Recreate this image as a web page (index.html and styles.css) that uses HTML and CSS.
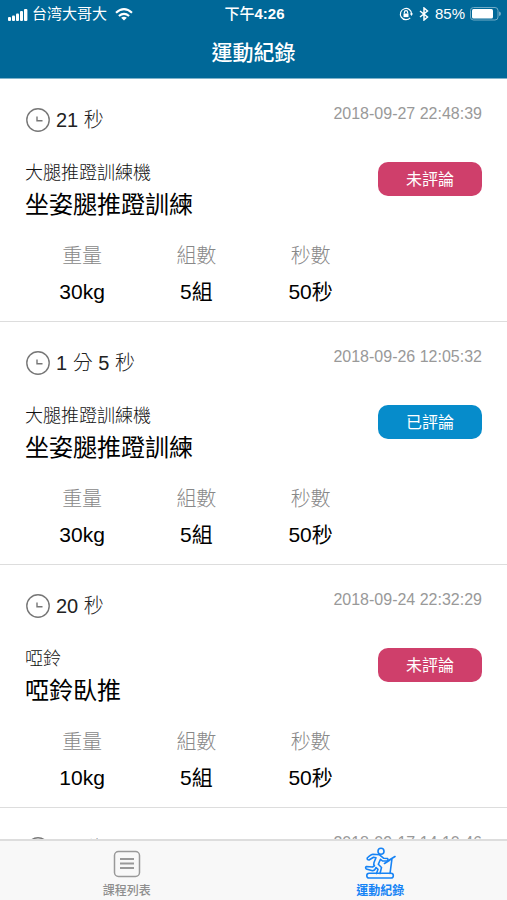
FILE: index.html
```html
<!DOCTYPE html>
<html lang="zh-Hant">

<head>
  <meta charset="UTF-8" />
  <meta name="viewport" content="width=device-width, initial-scale=1" />
  <title>運動紀錄</title>
  <link rel="stylesheet" href="styles.css">
</head>

<body>
  <!-- Icons used more than once -->
  <svg class="symbols" aria-hidden="true">
    <symbol id="clock" viewBox="0 0 24 24">
      <circle cx="12.5" cy="12" r="11.2" fill="none" stroke="#777" stroke-width="1.4" />
      <path d="M11.500 8.500V12.800H17" fill="none" stroke="#777" stroke-width="1.4" />
    </symbol>
  </svg>

  <header class="header">
    <div class="status-bar">
      <div class="status-left">
        <svg width="20" height="13" viewBox="0 0 20 13" fill="#fff" aria-hidden="true">
          <rect x="0" y="9" width="3" height="4" rx="1" />
          <rect x="4" y="7.5" width="3" height="5.5" rx="1" />
          <rect x="8" y="5.5" width="3" height="7.5" rx="1" />
          <rect x="12" y="3" width="3" height="10" rx="1" />
          <rect x="16" y="1" width="3.4" height="12" rx="1" />
        </svg>
        <span>台湾大哥大</span>
        <svg class="wifi" width="18" height="13" viewBox="0 0 18 13" aria-hidden="true">
          <path d="M1 4.8Q9-2.4 17 4.8M3.9 8Q9 3.6 14.1 8" fill="none" stroke="#fff" stroke-width="2.1" />
          <path d="M9 12.6L6.1 9.8Q9 7.6 11.9 9.8Z" fill="#fff" />
        </svg>
      </div>
      <div class="status-time">下午<b>4:26</b></div>
      <div class="status-right">
        <svg width="14" height="14" viewBox="0 0 14 14" fill="none" stroke="#fff" stroke-width="1.2" aria-hidden="true">
          <path d="M11.2 10.8A5.6 5.6 0 1 1 12.6 7" />
          <path d="M10.8 6.6H14L12.5 9Z" fill="#fff" stroke="none" />
          <rect x="4.5" y="6.5" width="5" height="3.6" fill="#fff" stroke="none" />
          <path d="M5.4 6.6V5.2a1.6 1.6 0 0 1 3.2 0v1.4" />
        </svg>
        <svg width="10" height="14" viewBox="0 0 10 14" fill="none" stroke="#fff" stroke-width="1.5" aria-hidden="true">
          <path d="M1 4L8.5 10L5 13V1L8.5 4L1 10" />
        </svg>
        <span>85%</span>
        <svg class="battery" width="31" height="14" viewBox="0 0 31 14" aria-hidden="true">
          <rect x="0.5" y="0.5" width="27.5" height="12.5" rx="3" fill="none" stroke="#70abc6" />
          <rect x="2" y="2" width="21" height="9.5" rx="1.5" fill="#fff" />
          <path d="M29 4.5q2 .5 2 2.3t-2 2.3z" fill="#70abc6" />
        </svg>
      </div>
    </div>
    <h1 class="page-title">運動紀錄</h1>
  </header>

  <main class="records">
    <article class="record">
      <div class="record-top">
        <svg class="clock" aria-hidden="true"><use href="#clock" /></svg>
        <span class="duration">21 秒</span>
        <time class="date">2018-09-27 22:48:39</time>
      </div>
      <div class="record-info">
        <div>
          <p class="machine">大腿推蹬訓練機</p>
          <h2 class="exercise">坐姿腿推蹬訓練</h2>
        </div>
        <button class="review-btn" type="button">未評論</button>
      </div>
      <dl class="stats">
        <div><dt>重量</dt><dd>30kg</dd></div>
        <div><dt>組數</dt><dd>5組</dd></div>
        <div><dt>秒數</dt><dd>50秒</dd></div>
      </dl>
    </article>

    <article class="record">
      <div class="record-top">
        <svg class="clock" aria-hidden="true"><use href="#clock" /></svg>
        <span class="duration">1 分 5 秒</span>
        <time class="date">2018-09-26 12:05:32</time>
      </div>
      <div class="record-info">
        <div>
          <p class="machine">大腿推蹬訓練機</p>
          <h2 class="exercise">坐姿腿推蹬訓練</h2>
        </div>
        <button class="review-btn done" type="button">已評論</button>
      </div>
      <dl class="stats">
        <div><dt>重量</dt><dd>30kg</dd></div>
        <div><dt>組數</dt><dd>5組</dd></div>
        <div><dt>秒數</dt><dd>50秒</dd></div>
      </dl>
    </article>

    <article class="record">
      <div class="record-top">
        <svg class="clock" aria-hidden="true"><use href="#clock" /></svg>
        <span class="duration">20 秒</span>
        <time class="date">2018-09-24 22:32:29</time>
      </div>
      <div class="record-info">
        <div>
          <p class="machine">啞鈴</p>
          <h2 class="exercise">啞鈴臥推</h2>
        </div>
        <button class="review-btn" type="button">未評論</button>
      </div>
      <dl class="stats">
        <div><dt>重量</dt><dd>10kg</dd></div>
        <div><dt>組數</dt><dd>5組</dd></div>
        <div><dt>秒數</dt><dd>50秒</dd></div>
      </dl>
    </article>

    <article class="record">
      <div class="record-top">
        <svg class="clock" aria-hidden="true"><use href="#clock" /></svg>
        <span class="duration">19 秒</span>
        <time class="date">2018-09-17 14:10:46</time>
      </div>
    </article>
  </main>

  <nav class="tab-bar">
    <a class="tab" href="#courses">
      <svg width="28" height="28" viewBox="0 0 28 28" fill="none" stroke="#999" aria-hidden="true">
        <rect x="1.5" y="1.5" width="25" height="25" rx="4" stroke-width="1.5" />
        <path d="M7 9H21M7 13.5H21M7 18H21" stroke-width="2" />
      </svg>
      <span>課程列表</span>
    </a>
    <a class="tab active" href="#records">
      <svg width="32" height="32" viewBox="0 0 32 32" fill="none" stroke="#1683f5" stroke-width="1.6" stroke-linecap="round" stroke-linejoin="round" aria-hidden="true">
        <circle cx="17" cy="4.300" r="3" />
        <path d="M15.500 7.800L9 7.300Q7 7.500 3.200 11Q3 13 5 13L9.500 10.300L12 10.800L10 15.500Q9.300 17.500 10.500 18.800L8.500 20L2.500 19.500Q.8 20.500 2.300 22L8.500 23.800Q11 23.500 12 20.500L14 22.300L12.500 26.500M16 26.500L17.500 20.500L14.300 17.300L16.500 12.300L18.500 14L23 14Q24.700 13 23.500 11.500L19.800 11.300L15.500 7.800" />
        <path d="M20.500 16.500L26 13M24.500 13.500L31 9.500M28 11.500L26 26.500" />
        <rect x="2.800" y="26.300" width="26.500" height="4.700" rx="2.300" />
      </svg>
      <span>運動紀錄</span>
    </a>
  </nav>
</body>

</html>
```
FILE: styles.css
```css
/* Reset and base styles */
* {
  box-sizing: border-box;
}

body {
  font-family: "Liberation Sans", "Noto Sans CJK TC", sans-serif;
  margin: 0;
  height: 100vh;
  display: flex;
  flex-direction: column;
  background: #fff;
  color: #000;
}

h1,
h2,
p,
dl,
dd {
  margin: 0;
}

svg {
  display: block;
  flex: none;
}

.symbols {
  position: absolute;
  width: 0;
  height: 0;
}

/* Header */
.header {
  flex: none;
  background: #006898;
  border-bottom: 1px solid #7fb3cb;
  color: #fff;
}

.status-bar {
  display: grid;
  grid-template-columns: 1fr auto 1fr;
  align-items: center;
  height: 28px;
  padding: 0 6px 0 8px;
  font-size: 15px;
  line-height: 20px;
}

.status-left,
.status-right {
  display: flex;
  align-items: center;
  gap: 4px;
}

.wifi {
  margin-left: 4px;
}

.status-right {
  justify-content: flex-end;
  gap: 6px;
}

.battery {
  margin-left: -1px;
}

.status-time {
  font-weight: 500;
}

.page-title {
  padding: 10px 0;
  font-size: 21px;
  font-weight: 500;
  line-height: 30px;
  text-align: center;
}

/* Record list */
.records {
  flex: 1;
  min-height: 0;
  overflow: hidden;
}

.record {
  padding: 27px 25px 14px;
  border-bottom: 1px solid #ddd;
}

.record-top {
  display: flex;
  align-items: center;
  height: 28px;
  margin-bottom: 27px;
}

.clock {
  width: 25px;
  height: 24px;
  margin-right: 6px;
}

.duration {
  color: #222;
  font-size: 20px;
  font-weight: 300;
  line-height: 28px;
}

.date {
  align-self: flex-start;
  margin-left: auto;
  color: #999;
  font-size: 16px;
  line-height: 16px;
}

.record-info {
  display: flex;
  align-items: flex-start;
  justify-content: space-between;
  margin-bottom: 16px;
}

.machine {
  color: #111;
  font-size: 18px;
  font-weight: 300;
  line-height: 24px;
}

.exercise {
  font-size: 24px;
  font-weight: 400;
  line-height: 40px;
}

.review-btn {
  width: 104px;
  height: 34px;
  margin-top: 1px;
  padding: 0 0 2px;
  border: none;
  border-radius: 10px;
  background: #cf3f6b;
  color: #fff;
  font-family: inherit;
  font-size: 16px;
  cursor: pointer;
}

.review-btn.done {
  background: #068ccb;
}

.stats {
  display: grid;
  grid-template-columns: repeat(4, 1fr);
  text-align: center;
  line-height: 30px;
}

.stats dt {
  margin-bottom: 6px;
  color: #888;
  font-size: 20px;
  font-weight: 300;
}

.stats dd {
  font-size: 21px;
}

/* Bottom tabs */
.tab-bar {
  flex: none;
  display: flex;
  height: 61px;
  border-top: 2px solid #ddd;
  background: #f8f8f8;
}

.tab {
  flex: 1;
  display: flex;
  flex-direction: column;
  align-items: center;
  justify-content: flex-end;
  gap: 4px;
  color: #8e8e8e;
  font-size: 12px;
  font-weight: 500;
  line-height: 18px;
  text-decoration: none;
}

.tab.active {
  gap: 3px;
  color: #1683f5;
  font-weight: 700;
}
```
